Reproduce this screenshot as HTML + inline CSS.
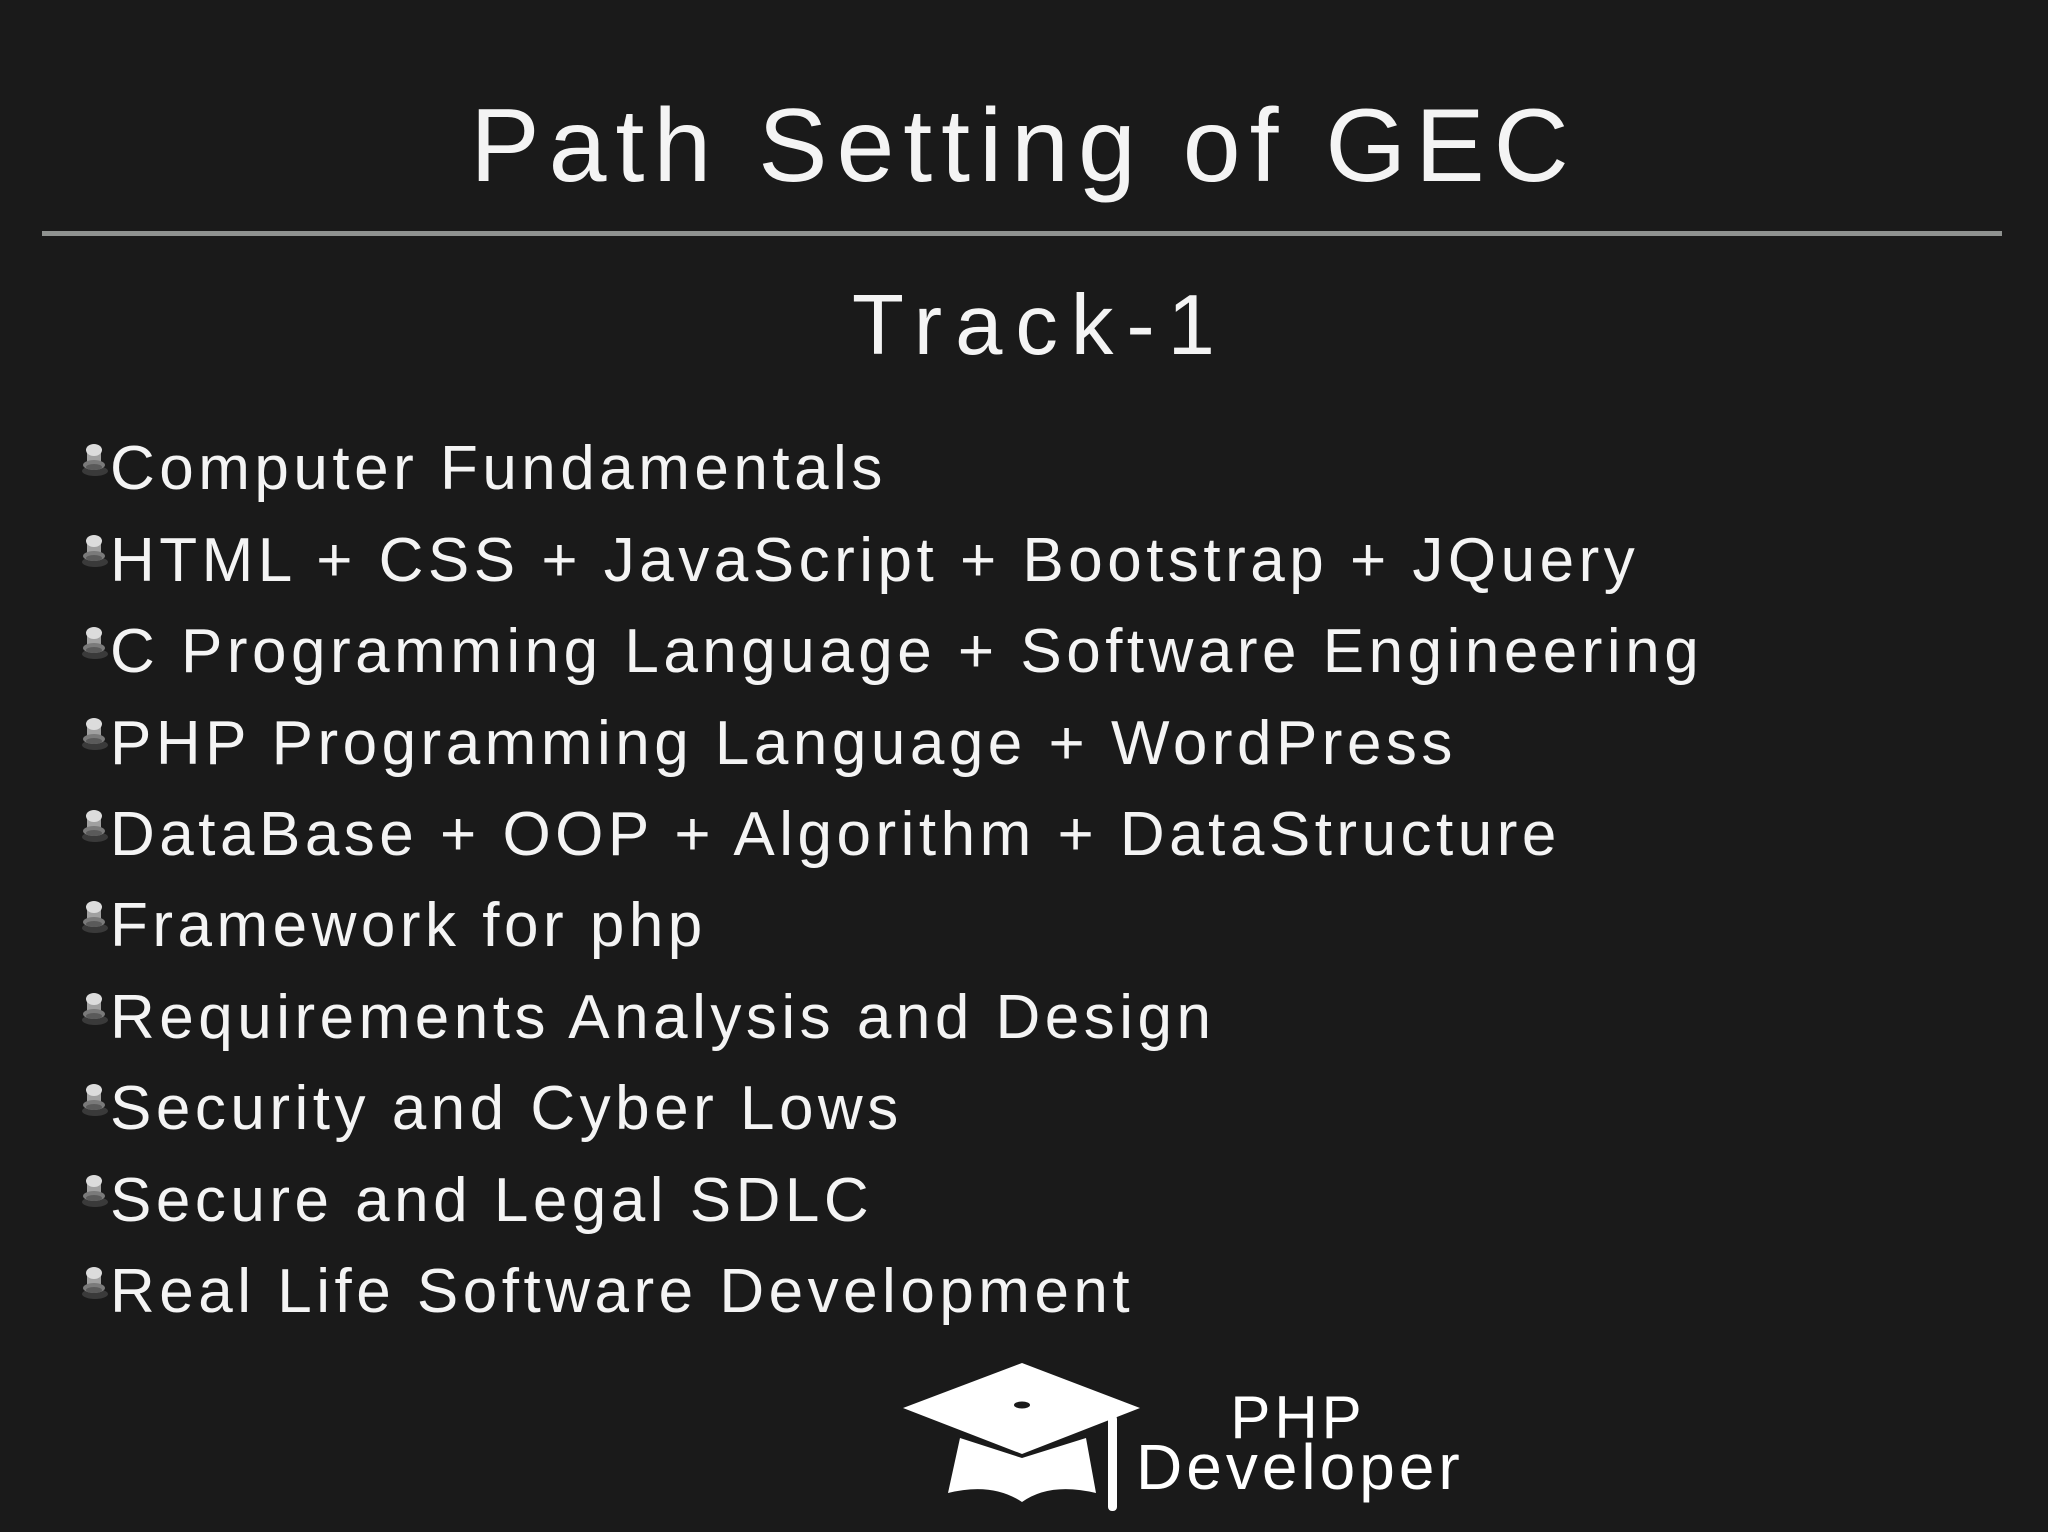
<!DOCTYPE html>
<html><head><meta charset="utf-8"><style>
html,body{margin:0;padding:0;background:#1a1a1a;}
body{width:2048px;height:1532px;position:relative;overflow:hidden;font-family:"Liberation Sans",sans-serif;color:#f4f4f4;}
.t{position:absolute;white-space:nowrap;line-height:1;}
.title{top:94px;left:0;width:2048px;text-align:center;font-size:104px;letter-spacing:9px;}
.rule{position:absolute;left:42px;width:1960px;top:231px;height:5px;background:#8f9290;}
.track{top:283px;left:0;width:2080px;text-align:center;font-size:85px;letter-spacing:13px;}
.li{left:110px;font-size:62px;letter-spacing:4.5px;}
</style></head><body>
<div class="t title">Path Setting of GEC</div>
<div class="rule"></div>
<div class="t track">Track-1</div>

<div class="t li" style="top:438px">Computer Fundamentals</div>
<div class="t li" style="top:530px">HTML + CSS + JavaScript + Bootstrap + JQuery</div>
<div class="t li" style="top:621px">C Programming Language + Software Engineering</div>
<div class="t li" style="top:713px">PHP Programming Language + WordPress</div>
<div class="t li" style="top:804px">DataBase + OOP + Algorithm + DataStructure</div>
<div class="t li" style="top:895px">Framework for php</div>
<div class="t li" style="top:987px">Requirements Analysis and Design</div>
<div class="t li" style="top:1078px">Security and Cyber Lows</div>
<div class="t li" style="top:1170px">Secure and Legal SDLC</div>
<div class="t li" style="top:1261px">Real Life Software Development</div>

<svg width="2048" height="1532" style="position:absolute;left:0;top:0">
<defs>
<g id="pin">
<ellipse cx="1" cy="30" rx="13" ry="5" fill="#3a3a3a"/>
<rect x="-7" y="9" width="14" height="17" fill="#a0a0a0"/>
<ellipse cx="0" cy="24" rx="11" ry="5" fill="#7a7a7a"/>
<ellipse cx="0" cy="26" rx="8" ry="3" fill="#5a5a5a"/>
<ellipse cx="0" cy="9" rx="8" ry="6" fill="#dcdcdc"/>
</g>
</defs>
<use href="#pin" x="94" y="441"/>
<use href="#pin" x="94" y="532"/>
<use href="#pin" x="94" y="624"/>
<use href="#pin" x="94" y="715"/>
<use href="#pin" x="94" y="807"/>
<use href="#pin" x="94" y="898"/>
<use href="#pin" x="94" y="990"/>
<use href="#pin" x="94" y="1081"/>
<use href="#pin" x="94" y="1172"/>
<use href="#pin" x="94" y="1264"/>
<polygon points="903,1408 1022,1363 1140,1408 1022,1454" fill="#fff"/>
<ellipse cx="1022" cy="1405" rx="8" ry="3.5" fill="#1a1a1a"/>
<path d="M960,1438 L1022,1458 L1086,1438 L1096,1493 Q1050,1482 1022,1502 Q992,1482 948,1493 Z" fill="#fff"/>
<rect x="1108" y="1415" width="9" height="96" rx="4" fill="#fff"/>
<text x="1298" y="1438" font-family="Liberation Sans" font-size="60" fill="#fff" text-anchor="middle" letter-spacing="4">PHP</text>
<text x="1136" y="1489" font-family="Liberation Sans" font-size="64" fill="#fff" letter-spacing="4">Developer</text>
</svg>
</body></html>
